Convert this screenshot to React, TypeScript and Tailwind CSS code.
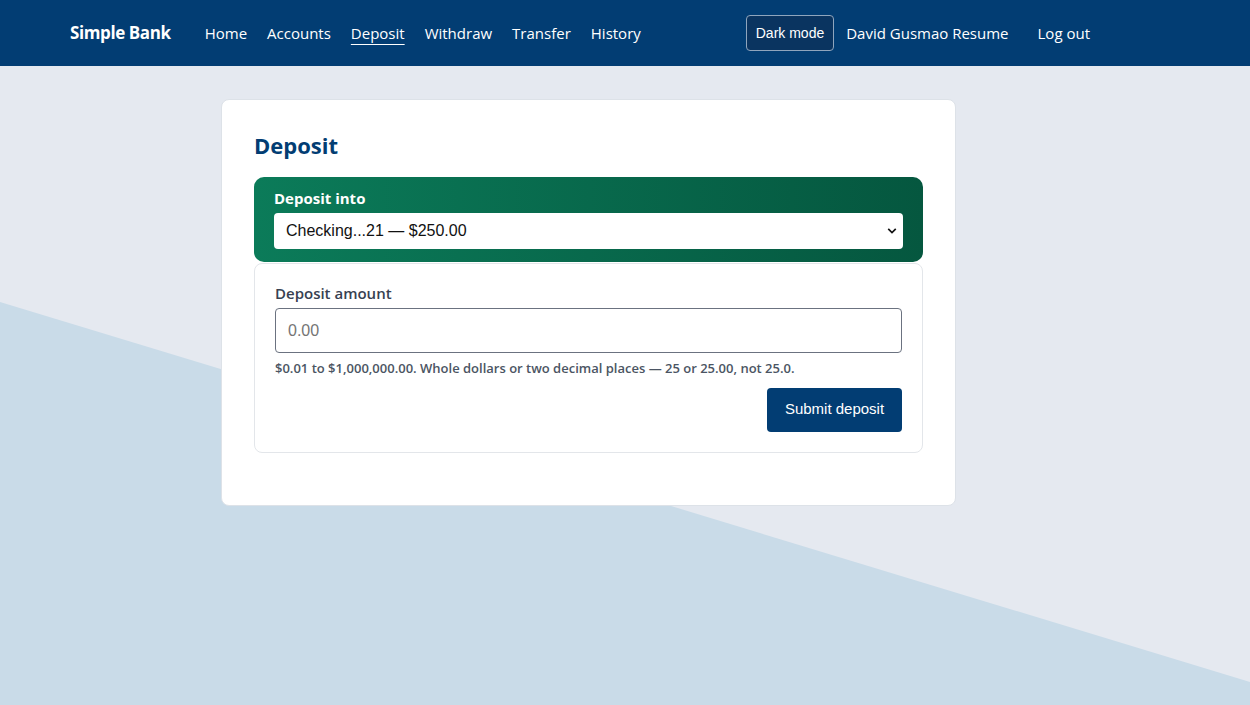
import React from 'react';

const navLinks = ['Home', 'Accounts', 'Deposit', 'Withdraw', 'Transfer', 'History'];

const Header: React.FC = () => (
  <header className="h-[66px] bg-[#023d73] text-white flex items-center px-[70px] whitespace-nowrap font-['Open_Sans',sans-serif]">
    <div className="flex items-center">
      <span className="text-[17px] font-bold tracking-[-0.4px] mr-[34px]">Simple Bank</span>
      <nav className="flex items-center gap-[20px] text-[15px]">
        {navLinks.map((l) => (
          <a key={l} href="#" className={l === 'Deposit' ? 'underline underline-offset-[5px] decoration-1' : ''}>
            {l}
          </a>
        ))}
      </nav>
    </div>
    <div className="ml-auto mr-[90px] flex items-center text-[15px]">
      <button className="h-[36px] px-[9px] rounded-[4px] border border-[#8fa5bd] bg-[#0a3460] text-[14px] font-['Liberation_Sans',sans-serif]">
        Dark mode
      </button>
      <a href="#" className="ml-[12px]">David Gusmao Resume</a>
      <a href="#" className="ml-[29px]">Log out</a>
    </div>
  </header>
);

const DepositForm: React.FC = () => (
  <div className="w-[735px] ml-[221px] mt-[33px] bg-white rounded-[8px] border border-[#dde2e8] px-[32px] pt-[34px] pb-[52px] relative">
    <h1 className="text-[22px] font-bold text-[#023d73] leading-none font-['Open_Sans',sans-serif]">Deposit</h1>

    <div className="mt-[21px] rounded-[10px] bg-linear-to-r from-[#0b7b59] via-[#08694c] to-[#05573f] px-[20px] pt-[14px] pb-[13px]">
      <label className="block text-white text-[15px] font-bold leading-none mb-[7px] font-['Open_Sans',sans-serif]">
        Deposit into
      </label>
      <div className="relative">
        <select className="w-full h-[36px] appearance-none bg-white rounded-[4px] pl-[12px] text-[16px] text-[#111] font-['Liberation_Sans',sans-serif]">
          <option>Checking...21 — $250.00</option>
        </select>
        <svg viewBox="0 0 12 12" className="absolute right-[6px] top-[13px] w-[10px] h-[10px] pointer-events-none">
          <path d="M1.5 3.5 6 8l4.5-4.5" fill="none" stroke="#111" strokeWidth="2" />
        </svg>
      </div>
    </div>

    <div className="mt-[1px] rounded-[8px] border border-[#e3e6ea] px-[20px] pt-[22px] pb-[20px]">
      <label className="block text-[15px] font-semibold text-[#374151] leading-none mb-[7px] font-['Open_Sans',sans-serif]">
        Deposit amount
      </label>
      <input
        placeholder="0.00"
        className="w-full h-[45px] rounded-[4px] border border-[#6b7280] px-[12px] text-[16px] placeholder-[#757575] font-['Liberation_Sans',sans-serif]"
      />
      <p className="mt-[6px] text-[13px] font-semibold text-[#4b5563] font-['Open_Sans',sans-serif]">
        $0.01 to $1,000,000.00. Whole dollars or two decimal places — 25 or 25.00, not 25.0.
      </p>
      <div className="flex justify-end mt-[9px]">
        <button className="w-[135px] h-[44px] bg-[#023d73] text-white text-[15px] rounded-[4px] font-['Liberation_Sans',sans-serif]">
          Submit deposit
        </button>
      </div>
    </div>
  </div>
);

export default function App() {
  return (
    <div className="min-h-[705px] flex flex-col bg-[#e5e9f0]">
      <Header />
      <main className="relative flex-1 min-h-[639px]">
        {/* two-tone diagonal backdrop */}
        <div className="absolute inset-0 bg-[#c9dbe8] [clip-path:polygon(0_236px,100%_616px,100%_100%,0_100%)]" />
        <DepositForm />
      </main>
    </div>
  );
}
